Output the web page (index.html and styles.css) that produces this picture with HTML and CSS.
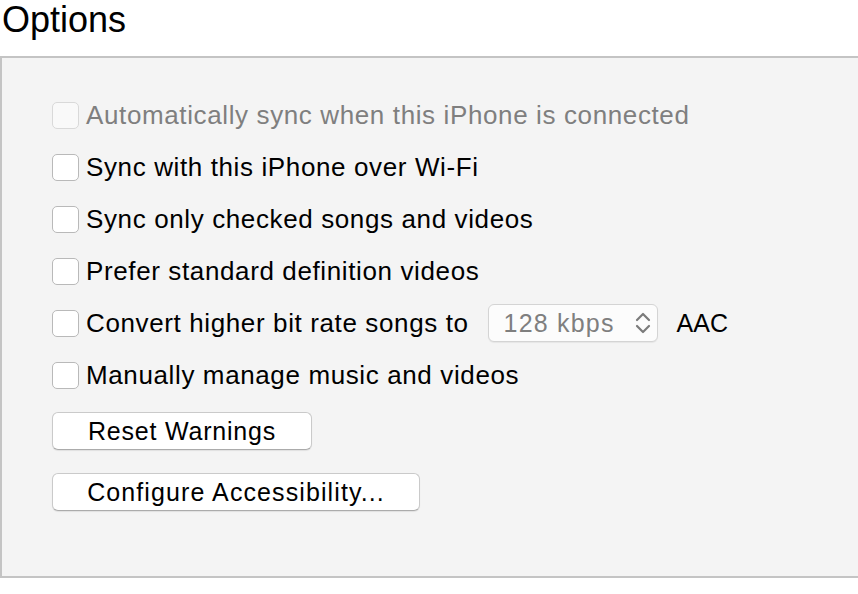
FILE: index.html
```html
<!DOCTYPE html>
<html>
<head>
<meta charset="utf-8">
<link rel="stylesheet" href="styles.css">
</head>
<body>
<div class="title">Options</div>
<div class="panel">
  <div class="row disabled"><span class="check"></span><span class="label">Automatically sync when this iPhone is connected</span></div>
  <div class="row"><span class="check"></span><span class="label">Sync with this iPhone over Wi-Fi</span></div>
  <div class="row"><span class="check"></span><span class="label">Sync only checked songs and videos</span></div>
  <div class="row"><span class="check"></span><span class="label">Prefer standard definition videos</span></div>
  <div class="row"><span class="check"></span><span class="label">Convert higher bit rate songs to</span>
    <span class="popup"><span class="popup-text">128 kbps</span>
      <svg class="chev" width="18" height="24" viewBox="0 0 18 24"><path d="M3 9 L9 3 L15 9 M3 15 L9 21 L15 15" fill="none" stroke="#7b7b7b" stroke-width="2.2" stroke-linecap="round" stroke-linejoin="round"/></svg>
    </span>
    <span class="aac">AAC</span>
  </div>
  <div class="row"><span class="check"></span><span class="label">Manually manage music and videos</span></div>
  <div class="buttons">
    <button class="btn btn-reset">Reset Warnings</button>
    <button class="btn btn-access">Configure Accessibility...</button>
  </div>
</div>
</body>
</html>
```
FILE: styles.css
```css
html, body {
  margin: 0;
  padding: 0;
  background: #ffffff;
  overflow: hidden;
  width: 858px;
  height: 594px;
}
body {
  font-family: "Liberation Sans", Arial, sans-serif;
  color: #000;
}
.title {
  font-size: 36px;
  line-height: 40px;
  height: 40px;
  padding-left: 2px;
  margin-bottom: 16px;
}
.panel {
  box-sizing: border-box;
  width: 900px;
  height: 522px;
  background: #f4f4f4;
  border-top: 2px solid #c4c4c4;
  border-left: 2px solid #c4c4c4;
  border-bottom: 2px solid #c4c4c4;
  padding: 31px 0 0 50px;
}
.row {
  display: flex;
  align-items: center;
  height: 52px;
  font-size: 26px;
  letter-spacing: 0.62px;
}
.check {
  box-sizing: border-box;
  width: 27px;
  height: 27px;
  border: 1px solid #b9b9b9;
  border-radius: 5px;
  background: #ffffff;
  margin-right: 7px;
  flex: none;
}
.disabled .check {
  background: #f9f9f9;
  border-color: #d9d9d9;
}
.disabled .label {
  color: #7f7f7f;
}
.popup {
  box-sizing: border-box;
  display: flex;
  align-items: center;
  width: 170px;
  height: 38px;
  margin-left: 19px;
  border: 1px solid #d4d4d4;
  border-radius: 6px;
  background: #fcfcfc;
  box-shadow: 0 1px 1px rgba(0,0,0,0.06);
  padding-left: 15px;
}
.popup-text {
  font-size: 25px;
  letter-spacing: 1.2px;
  color: #7f7f7f;
  width: 130px;
}
.chev {
  display: block;
}
.aac {
  margin-left: 19px;
  font-size: 25px;
  letter-spacing: 0;
}
.buttons {
  display: flex;
  flex-direction: column;
  align-items: flex-start;
  gap: 23px;
  margin-top: 11px;
}
.btn {
  box-sizing: border-box;
  height: 38px;
  padding: 0;
  text-align: center;
  font-family: "Liberation Sans", Arial, sans-serif;
  font-size: 25px;
  letter-spacing: 0.8px;
  color: #000;
  background: #ffffff;
  border: 1px solid #cacaca;
  border-bottom-color: #ababab;
  border-radius: 6px;
  box-shadow: 0 1px 1px rgba(0,0,0,0.08);
  margin: 0;
}
.btn-reset {
  width: 260px;
}
.btn-access {
  width: 368px;
  letter-spacing: 1.1px;
}
```
